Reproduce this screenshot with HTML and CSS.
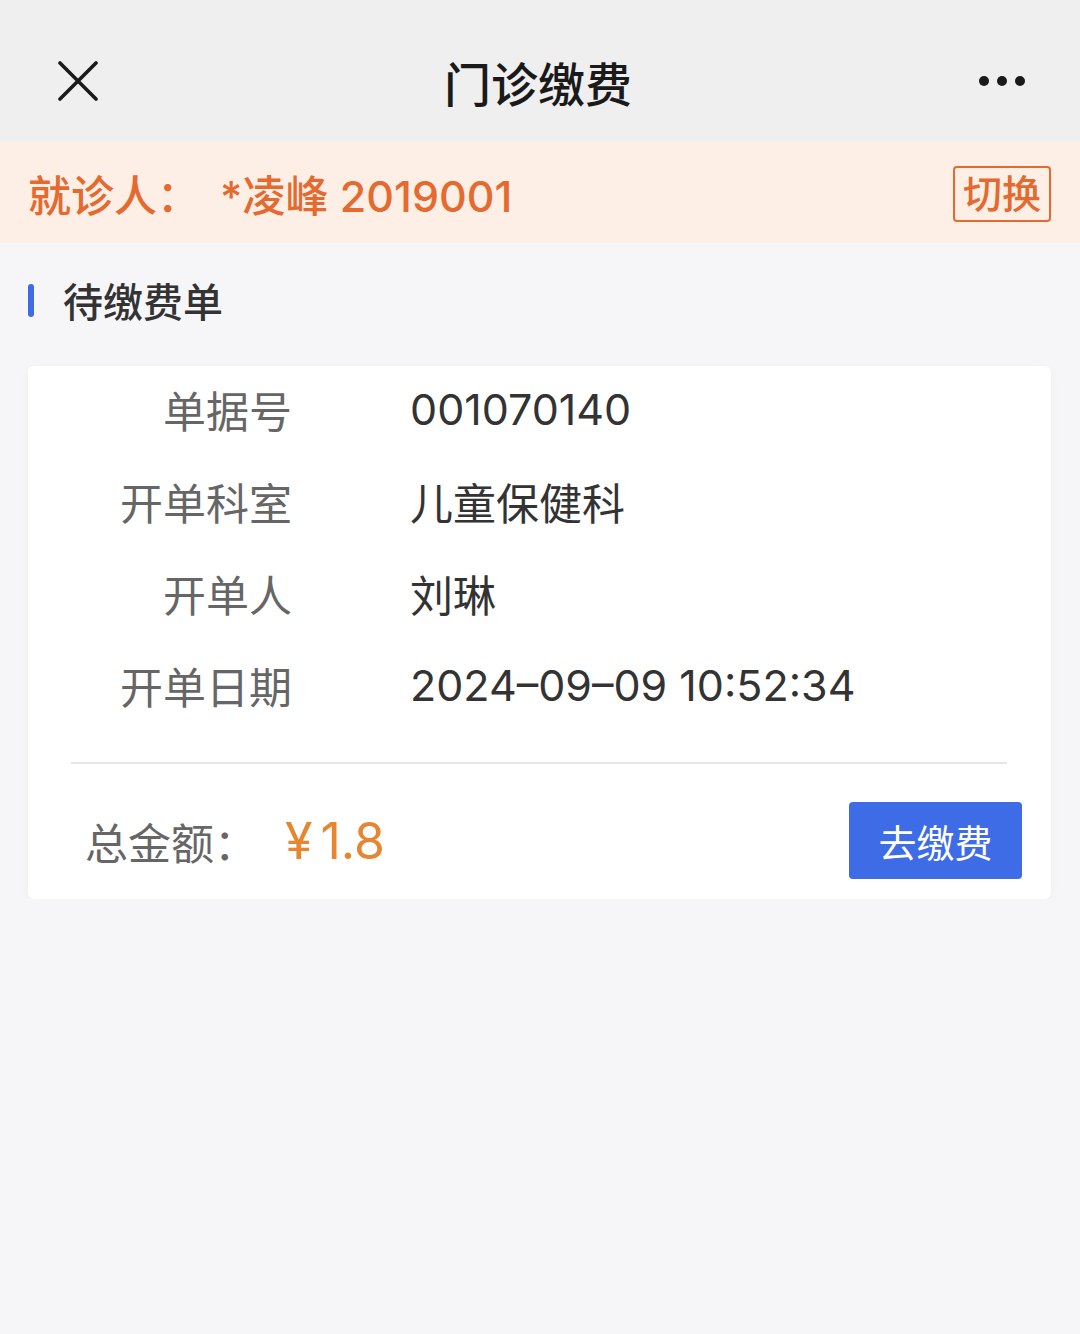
FILE: index.html
```html
<!DOCTYPE html>
<html lang="zh-CN">
<head>
    <meta charset="UTF-8">
    <meta name="viewport" content="width=device-width, initial-scale=1.0">
    <title>门诊缴费</title>
    <link rel="stylesheet" href="styles.css">
</head>
<body>
    <header class="nav-bar">
        <span class="nav-close">
            <svg width="40" height="40" viewBox="0 0 40 40">
                <path d="M2 2 L38 38 M38 2 L2 38" stroke="#1a1a1a" stroke-width="3.6" stroke-linecap="round"/>
            </svg>
        </span>
        <h1 class="nav-title">门诊缴费</h1>
        <span class="nav-more">
            <svg width="48" height="12" viewBox="0 0 48 12">
                <circle cx="6" cy="6" r="5" fill="#1a1a1a"/>
                <circle cx="24" cy="6" r="5" fill="#1a1a1a"/>
                <circle cx="42" cy="6" r="5" fill="#1a1a1a"/>
            </svg>
        </span>
    </header>

    <div class="patient-bar">
        <span class="patient-label">就诊人：</span>
        <span class="patient-name">*凌峰 2019001</span>
        <button class="switch-btn">切换</button>
    </div>

    <h2 class="section-title">待缴费单</h2>

    <div class="bill-card">
        <div class="bill-info">
            <div class="info-label">单据号</div>
            <div class="info-value">001070140</div>
            <div class="info-label">开单科室</div>
            <div class="info-value">儿童保健科</div>
            <div class="info-label">开单人</div>
            <div class="info-value">刘琳</div>
            <div class="info-label">开单日期</div>
            <div class="info-value">2024–09–09 10:52:34</div>
        </div>
        <div class="bill-divider"></div>
        <div class="bill-total">
            <span class="total-label">总金额：</span>
            <span class="total-amount"><span class="currency">¥</span>1.8</span>
            <button class="pay-btn">去缴费</button>
        </div>
    </div>
</body>
</html>
```

FILE: styles.css
```css
body {
    margin: 0;
    background-color: #f6f6f8;
    font-family: Inter, "Noto Sans CJK SC", "Noto Sans", sans-serif;
    color: #333;
}

.nav-bar {
    height: 142px;
    box-sizing: border-box;
    padding: 20px 54px 0 58px;
    background-color: #efefef;
    display: flex;
    align-items: center;
    justify-content: space-between;
}

.nav-close, .nav-more {
    display: flex;
    width: 48px;
}

.nav-more {
    justify-content: flex-end;
}

.nav-title {
    margin: 0 0 0 -8px;
    font-size: 47px;
    font-weight: 500;
    color: #1a1a1a;
}

.patient-bar {
    height: 101px;
    box-sizing: border-box;
    padding: 0 29px 0 28px;
    background-color: #fdefe5;
    display: flex;
    align-items: center;
    color: #e46a30;
    font-size: 43px;
    font-weight: 500;
}

.patient-label {
    width: 192px;
}

.patient-name {
    flex: 1;
}

.switch-btn {
    font-family: inherit;
    font-size: 39px;
    font-weight: 500;
    color: #e46a30;
    background: transparent;
    border: 2px solid #e46a30;
    border-radius: 4px;
    padding: 0 8px;
    height: 56px;
    line-height: 50px;
    margin-top: 2px;
}

.section-title {
    margin: 0;
    padding: 14px 28px 23px 28px;
    height: 86px;
    display: flex;
    align-items: center;
    font-size: 40px;
    font-weight: 500;
    color: #333;
}

.section-title::before {
    content: "";
    width: 6px;
    height: 33px;
    background-color: #3e6be6;
    border-radius: 3px;
    margin-right: 29px;
}

.bill-card {
    margin: 0 29px 0 28px;
    background-color: #fff;
    border-radius: 6px;
    box-shadow: 0 2px 8px rgba(0, 0, 0, 0.04);
    padding-bottom: 20px;
}

.bill-info {
    display: grid;
    grid-template-columns: 264px 1fr;
    column-gap: 118px;
    grid-auto-rows: 92px;
    align-items: center;
    font-size: 43px;
    padding-bottom: 2px;
}

.info-label {
    text-align: right;
    color: #666;
    margin-top: -6px;
}

.info-value {
    color: #333;
    margin-top: -6px;
}

.bill-divider {
    height: 2px;
    background-color: #e6e6e6;
    margin: 26px 44px 38px 43px;
}

.bill-total {
    display: flex;
    align-items: center;
    padding: 0 29px 0 57px;
}

.total-label {
    font-size: 43px;
    color: #666;
    width: 200px;
}

.total-amount {
    flex: 1;
    font-size: 50px;
    color: #e8852f;
}

.currency {
    margin-right: 8px;
}

.pay-btn {
    font-family: inherit;
    width: 173px;
    height: 77px;
    border: none;
    border-radius: 4px;
    background-color: #3e6be6;
    color: #fff;
    font-size: 38px;
}
```
